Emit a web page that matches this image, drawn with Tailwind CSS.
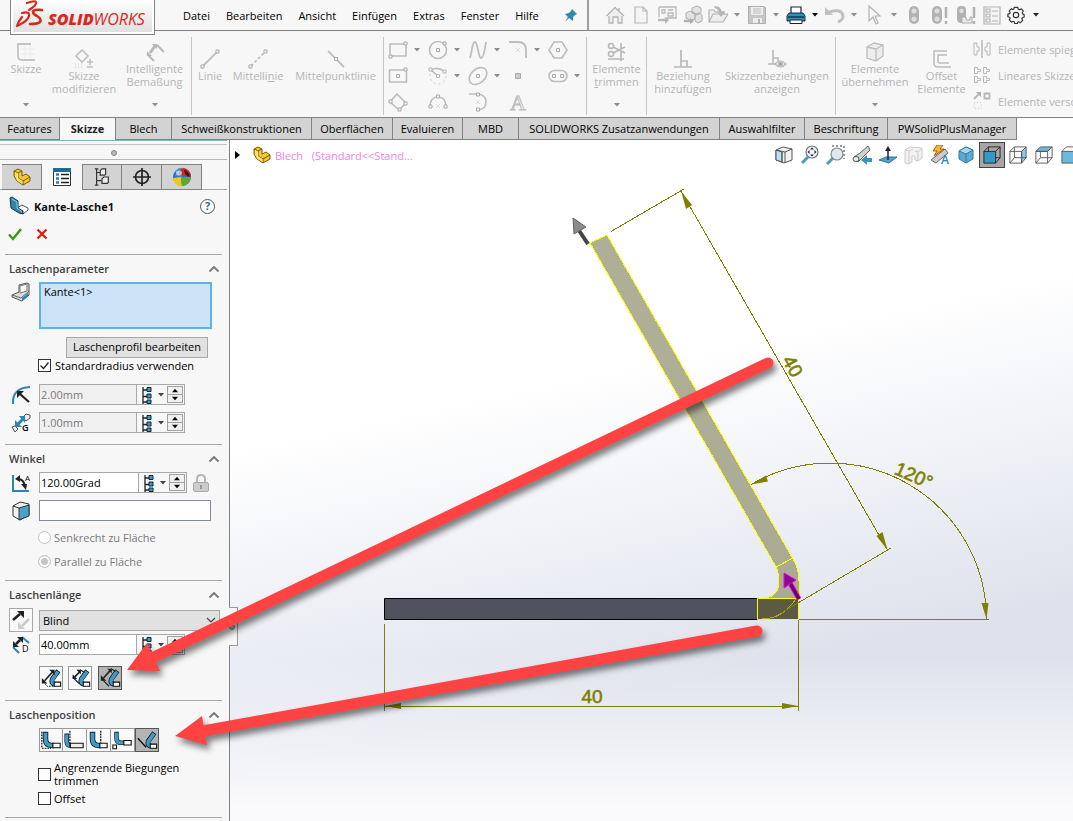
<!DOCTYPE html>
<html lang="de">
<head>
    <meta charset="UTF-8">
    <meta name="viewport" content="width=device-width, initial-scale=1.0">
    <title>SOLIDWORKS - Kante-Lasche</title>
    <script src="https://cdn.jsdelivr.net/npm/@tailwindcss/browser@4"></script>
</head>
<body class="relative flex h-screen flex-col overflow-hidden bg-[#f7f7f7] font-['Open_Sans','Noto_Sans',sans-serif] text-[11px] leading-[13px] text-black">

    <!-- Shared symbols -->
    <svg class="hidden">
        <symbol id="caret" viewBox="0 0 6 4"><path d="M0 0h6L3 3.5z" fill="currentColor"/></symbol>
        <symbol id="chevron" viewBox="0 0 12 8"><path d="M1.500 6.500L6 2l4.500 4.500" fill="none" stroke="#777" stroke-width="1.800"/></symbol>
        <symbol id="tree" viewBox="0 0 12 18">
            <path d="M2 1v17M2 4h4M2 10.500h4M2 16h4" fill="none" stroke="#222" stroke-width="1.300"/>
            <path d="M6 1.500h4v4H6zM6 8h4v4H6zM6 14h4v3.500H6z" fill="#3b9cc9" stroke="#123" />
        </symbol>
        <symbol id="up" viewBox="0 0 14 8"><path d="M3.500 6h7L7 2z" fill="#000"/></symbol>
        <symbol id="down" viewBox="0 0 14 8"><path d="M3.500 2h7L7 6z" fill="#000"/></symbol>
        <symbol id="part" viewBox="0 0 20 20">
            <path d="M2 4l4-2 4 2v5l4-2 4 3v4l-7 4-6-4-3-5z" fill="#f5c431" stroke="#7a5a08" stroke-linejoin="round"/>
            <path d="M2 4l4 2 4-2M6 6v5l5 3 7-4M11 14v4" fill="none" stroke="#7a5a08"/>
            <path d="M3 5l3 1.500v4.500l4.500 3v3L5 13.500 3 9z" fill="#ffe27a"/>
        </symbol>
        <symbol id="flange-up" viewBox="0 0 24 24">
            <path d="M6 3v8q0 7 7 7h2" fill="none" stroke="#0d2a3a" stroke-width="6"/>
            <path d="M6 4v7q0 7 7 7h1" fill="none" stroke="#4599c4" stroke-width="4"/>
            <path d="M14 15.500h8v5h-8z" fill="#fff" stroke="#111" stroke-width="1.200"/>
        </symbol>
        <symbol id="flange-tilt" viewBox="0 0 24 24">
            <path d="M20 4l-6.500 9q-2 5 3 5.500" fill="none" stroke="#0d2a3a" stroke-width="5.500"/>
            <path d="M19.500 5l-6 8.500q-1.500 4.500 3 5" fill="none" stroke="#4599c4" stroke-width="3.800"/>
            <path d="M15.500 16.500h7v4.500h-7z" fill="#fff" stroke="#111" stroke-width="1.200"/>
        </symbol>
    </svg>

    <!-- Title and menu bar -->
    <header class="flex h-[31px] shrink-0 border-b border-[#828282]">
        <div class="relative z-10 ml-[10px] h-[35px] w-[145px] shrink-0 border border-t-0 border-[#828282] bg-linear-to-b from-white to-[#dedede] shadow-[inset_0_0_0_2px_#fff]">
            <svg class="h-[34px] w-[143px]" viewBox="0 0 143 34" role="img" aria-label="SOLIDWORKS">
                <g fill="none" stroke="#da291c" stroke-linecap="round" stroke-linejoin="round">
                    <path d="M16 3q8-3 9-1 1 3-7 8" stroke-width="2.200"/>
                    <path d="M11 13q8-2 7 3-1 5-12 10 1-4 5-9" stroke-width="2.200"/>
                    <path d="M31 10q-9-1-9 2 0 2 4 4 5 3 3 6-2 2-10 2" stroke-width="2.600"/>
                </g>
                <text x="37" y="25" fill="#da291c" font-family="Open Sans, sans-serif" font-size="16" font-style="italic"><tspan font-weight="800">SOLID</tspan><tspan>WORKS</tspan></text>
            </svg>
        </div>
        <nav class="ml-[28px] flex w-[406px] shrink-0 items-center gap-4 border-r-2 border-[#a0a0a0]">
            <a href="#">Datei</a>
            <a href="#">Bearbeiten</a>
            <a href="#">Ansicht</a>
            <a href="#">Einfügen</a>
            <a href="#">Extras</a>
            <a href="#">Fenster</a>
            <a href="#">Hilfe</a>
            <svg class="ml-2 size-[16px]" viewBox="0 0 16 16"><path d="M9 2l5 5-2 1-2 2 0 4-4-3-4 4 3-5-3-3 4-1 2-2z" fill="#2f87b5"/></svg>
        </nav>

        <!-- Quick access -->
        <div class="flex flex-1 items-center pl-[16px] text-[#8d8d8d]">
            <button aria-label="Start" class="w-[26px]"><svg class="size-[20px]" viewBox="0 0 20 20" fill="#eee" stroke="#b4b4b4" stroke-width="1.300"><path d="M4 9v9h4v-6h5v6h4V9M14 3v3"/><path d="M1.500 11L10 2.500l9 8.500"/></svg></button>
            <button aria-label="Neu" class="w-[26px]"><svg class="size-[20px]" viewBox="0 0 20 20" fill="#f4f4f4" stroke="#b8b8b8" stroke-width="1.200"><path d="M4 2h8l4 4v12H4zM12 2v4h4"/></svg></button>
            <button aria-label="Zeichnung" class="w-[26px]"><svg class="size-[20px]" viewBox="0 0 20 20" fill="none" stroke="#b8b8b8" stroke-width="1.300"><path d="M2 2h17v11H9M2 2v10"/><path d="M5 5h3v3H5zM11 5h5M11 8h5v3h-5z"/><path d="M1 15h7" stroke-width="2.500"/><path d="M8 12l4 3-4 4z" fill="#b4b4b4" stroke="none"/></svg></button>
            <button aria-label="Baugruppe" class="w-[25px]"><svg class="size-[20px]" viewBox="0 0 20 20" fill="#e2e2e2" stroke="#b0b0b0"><path d="M9 3l5-2 4 2v5l-4 2-5-2zM3 8l4-2 5 2v6l-5 1-4-2zM12 9l4-1 3 2v6l-4 2-3-2z"/><path d="M1 16h6" stroke-width="2.500"/><path d="M7 13l4 3-4 3z" fill="#aaa" stroke="none"/></svg></button>
            <button aria-label="Öffnen" class="flex w-[39px] items-center gap-1.5"><svg class="size-[20px]" viewBox="0 0 20 20" fill="#eee" stroke="#b4b4b4" stroke-width="1.200"><path d="M1 17V5h5l1 2h9v3M1 17l4-8h15l-5 8z"/><path d="M6 2q7-1 7 6M10 7l3 4 3-4z" fill="#bbb"/></svg><svg class="h-1 w-1.5"><use href="#caret"/></svg></button>
            <button aria-label="Speichern" class="flex w-[39px] items-center gap-1.5"><svg class="size-[20px]" viewBox="0 0 20 20"><path d="M1.500 1.500h16l1 1v16h-17z" fill="#c6c6c6" stroke="#b0b0b0"/><path d="M4 2h12v8H4z" fill="#eee"/><path d="M6 4h8M6 6h8M6 8h8" stroke="#bbb"/><path d="M6 13h9v5H6z" fill="#eee"/><path d="M11 14h2v4h-2z" fill="#b0b0b0"/></svg><svg class="h-1 w-1.5"><use href="#caret"/></svg></button>
            <button aria-label="Drucken" class="flex w-[39px] items-center gap-1.5 text-black"><svg class="size-[20px]" viewBox="0 0 20 20"><path d="M5 9V2h10v7" fill="#fff" stroke="#222" stroke-width="1.200"/><path d="M3 8h14l2 3v5H1v-5z" fill="#2f8fbe" stroke="#134"/><path d="M4 15h12v3.500H4z" fill="#fff" stroke="#222"/><path d="M2 12h16" stroke="#0d3a55" stroke-width="1.500"/></svg><svg class="h-1 w-1.5"><use href="#caret"/></svg></button>
            <button aria-label="Rückgängig" class="flex w-[40px] items-center gap-1.5"><svg class="size-[20px]" viewBox="0 0 20 20"><path d="M4 7q13-4 14 4 0 4-5 6" fill="none" stroke="#c0c0c0" stroke-width="3"/><path d="M0 2v8h8z" fill="#c0c0c0"/></svg><svg class="h-1 w-1.5"><use href="#caret"/></svg></button>
            <button aria-label="Auswählen" class="flex w-[40px] items-center gap-1.5"><svg class="size-[20px]" viewBox="0 0 20 20" fill="#f6f6f6" stroke="#b4b4b4" stroke-width="1.200"><path d="M4 1v15l4-4 3 7 2-1-3-7h5z"/></svg><svg class="h-1 w-1.5"><use href="#caret"/></svg></button>
            <button aria-label="Neu aufbauen" class="w-[25px]"><svg class="size-[20px]" viewBox="0 0 20 20"><rect x="4" y="1" width="10" height="18" rx="5" fill="#b2b2b2"/><circle cx="9" cy="6" r="2.500" fill="#ddd"/><circle cx="9" cy="14" r="2.500" fill="#ddd"/></svg></button>
            <button aria-label="Alles neu aufbauen" class="w-[26px]"><svg class="size-[20px]" viewBox="0 0 20 20"><rect x="2" y="1" width="10" height="18" rx="5" fill="#b2b2b2"/><circle cx="7" cy="6" r="2.500" fill="#ddd"/><circle cx="7" cy="14" r="2.500" fill="#ddd"/><path d="M16 2v11M16 16v3" stroke="#b2b2b2" stroke-width="2.500"/></svg></button>
            <button aria-label="Datei aufbauen" class="w-[26px]"><svg class="size-[20px]" viewBox="0 0 20 20"><rect x="1" y="1" width="9" height="17" rx="4" fill="#b2b2b2"/><circle cx="5.500" cy="6" r="2.200" fill="#ddd"/><path d="M6 12h4v3h4v-3h2v6H6z" fill="#eee" stroke="#aaa"/><path d="M18 2v11M18 16v3" stroke="#b2b2b2" stroke-width="2.500"/></svg></button>
            <button aria-label="Eigenschaften" class="w-[25px]"><svg class="size-[20px]" viewBox="0 0 20 20" fill="none" stroke="#b4b4b4" stroke-width="1.200"><path d="M2 2h16v17H2z" fill="#f4f4f4"/><path d="M4 4h4v3H4zM4 9h4v3H4zM4 14h4v3H4zM10 6h6M10 11h6M10 16h6"/></svg></button>
            <button aria-label="Optionen" class="flex items-center gap-2 text-[#222]"><svg class="size-[18px]" viewBox="0 0 20 20" fill="none" stroke="#333" stroke-width="1.300" stroke-linejoin="round"><path d="M8 1.500h4l.5 2 1.500.7 2-1L18 5.500l-1 2 .5 1.500 1.500.5v3l-2 .5-.5 1.500 1 1.500-2.500 2.500-2-1-1 .5-.5 1.500H8.500L8 17.500 6.500 17l-1.500 1L2.500 15.500l1-1.500L3 12.500l-2-.5V9l2-.5L3.500 7l-1-1.500L5 3l1.500 1L7.500 3.500z"/><circle cx="10" cy="10" r="3"/></svg><svg class="h-1 w-1.5"><use href="#caret"/></svg></button>
        </div>
    </header>

    <!-- Ribbon -->
    <div class="flex h-[86px] shrink-0 items-start overflow-hidden pt-[6px] text-center text-[#b5b5b5]">
        <div class="flex h-[78px] shrink-0 border-r border-[#c6c6c6]">
            <button class="flex w-[52px] flex-col items-center pt-[5px]">
                <svg class="size-[20px]" viewBox="0 0 20 20" fill="none" stroke="#c4c4c4" stroke-width="1.800"><path d="M9 4v12M14 4v12M5 7h14M5 12h14" stroke="#ececec" stroke-width="1"/><path d="M15 2H2v12q0 4 4 4h13"/></svg>
                <span>Skizze</span>
                <svg class="mt-[28px] h-1 w-1.5 text-[#8d8d8d]"><use href="#caret"/></svg>
            </button>
            <button class="flex w-[64px] flex-col items-center pt-[12px]">
                <svg class="size-[20px]" viewBox="0 0 20 20" fill="none" stroke="#c0c0c0" stroke-width="1.600"><path d="M8 1l6 6-6 6-6-6z"/><path d="M1 15h8M1 18h8" stroke-dasharray="1 2" stroke="#d8d8d8"/><path d="M13 13h6M16 10v6M13 18h6"/></svg>
                <span>Skizze<br>modifizieren</span>
            </button>
            <button class="flex w-[75px] flex-col items-center pt-[5px] pl-[2px]">
                <svg class="size-[20px]" viewBox="0 0 20 20" fill="none" stroke="#b8b8b8" stroke-width="1.800"><path d="M5 11l5-7" stroke-width="3"/><path d="M2 9v5h5zM7 2h5v5z" fill="#b8b8b8" stroke="none"/><path d="M2 12l7 7M12 3l7 7"/></svg>
                <span>Intelligente<br>Bemaßung</span>
                <svg class="mt-[15px] h-1 w-1.5 text-[#8d8d8d]"><use href="#caret"/></svg>
            </button>
        </div>
        <div class="flex h-[78px] shrink-0 border-r border-[#c6c6c6]">
            <button class="flex w-[36px] flex-col items-center pt-[12px]">
                <svg class="size-[20px]" viewBox="0 0 20 20" fill="none" stroke="#c0c0c0"><path d="M3 17L17 3" stroke-width="1.800"/><path d="M1 16h3v3H1zM16 1h3v3h-3z" fill="#f7f7f7" stroke="#aaa"/></svg>
                <span>Linie</span>
            </button>
            <button class="flex w-[60px] flex-col items-center pt-[12px]">
                <svg class="size-[20px]" viewBox="0 0 20 20" fill="none" stroke="#c0c0c0"><path d="M3 17L17 3" stroke-width="1.800" stroke-dasharray="3 2"/><path d="M1 16h3v3H1zM16 1h3v3h-3z" fill="#f7f7f7" stroke="#aaa"/></svg>
                <span>Mittelli<u>n</u>ie</span>
            </button>
            <button class="flex w-[95px] flex-col items-center pt-[12px]">
                <svg class="size-[20px]" viewBox="0 0 20 20" fill="none" stroke="#c0c0c0"><path d="M2 2l16 16" stroke-width="1.800"/><path d="M8.500 8.500h3v3h-3z" fill="#f7f7f7" stroke="#aaa"/></svg>
                <span>Mittelpunktlinie</span>
            </button>
        </div>

        <!-- Sketch entities -->
        <div class="grid h-[78px] shrink-0 grid-cols-[40px_40px_40px_40px_38px] grid-rows-3 border-r border-[#c6c6c6] pl-[4px] text-[#8d8d8d]">
            <button aria-label="Rechteck" class="flex items-center gap-1.5"><svg class="size-[20px]" viewBox="0 0 20 20" fill="none" stroke="#bdbdbd"><path d="M2 4h16v12H2z" stroke-width="1.600"/><path d="M1 15h3v3H1zM16 2h3v3h-3z" fill="#f7f7f7" stroke="#aaa"/></svg><svg class="h-1 w-1.5"><use href="#caret"/></svg></button>
            <button aria-label="Kreis" class="flex items-center gap-1.5"><svg class="size-[20px]" viewBox="0 0 20 20" fill="none" stroke="#bdbdbd"><circle cx="10" cy="10" r="8.500" stroke-width="1.600"/><path d="M8.500 8.500h3v3h-3zM15 2h3v3h-3z" fill="#f7f7f7" stroke="#aaa"/></svg><svg class="h-1 w-1.5"><use href="#caret"/></svg></button>
            <button aria-label="Spline" class="flex items-center gap-1.5"><svg class="size-[20px]" viewBox="0 0 20 20" fill="none" stroke="#bdbdbd" stroke-width="1.800"><path d="M2 18C4 12 4 2 7 2s3 16 6 16 4-10 5-16"/></svg><svg class="h-1 w-1.5"><use href="#caret"/></svg></button>
            <button aria-label="Verrundung" class="flex items-center gap-1.5"><svg class="size-[20px]" viewBox="0 0 20 20" fill="none" stroke="#bdbdbd" stroke-width="1.800"><path d="M1 2h9q8 0 8 8v8"/><path d="M8 8l4 4M12 8l-4 4" stroke="#ddd" stroke-width="1"/></svg><svg class="h-1 w-1.5"><use href="#caret"/></svg></button>
            <button aria-label="Polygon" class="flex items-center"><svg class="size-[20px]" viewBox="0 0 20 20" fill="none" stroke="#bdbdbd"><path d="M6 2h8l5 8-5 8H6l-5-8z" stroke-width="1.600"/><path d="M8.500 8.500h3v3h-3z" stroke="#aaa"/></svg></button>

            <button aria-label="Mittelpunkt-Rechteck" class="flex items-center"><svg class="size-[20px]" viewBox="0 0 20 20" fill="none" stroke="#bdbdbd"><path d="M1.500 4h17v12h-17z" stroke-width="1.600"/><path d="M8.500 8.500h3v3h-3zM16 2h3v3h-3z" fill="#f7f7f7" stroke="#aaa"/></svg></button>
            <button aria-label="Bogen" class="flex items-center gap-1.5"><svg class="size-[20px]" viewBox="0 0 20 20" fill="none" stroke="#b8b8b8"><path d="M3 4q7-4 14 2M3 4l7 6" stroke-width="1.500"/><circle cx="10" cy="10" r="8" stroke-dasharray="2 3" stroke="#d0d0d0"/><path d="M1 2h3v3H1zM15 4h3v3h-3zM8.500 8.500h3v3h-3z" fill="#f7f7f7"/></svg><svg class="h-1 w-1.5"><use href="#caret"/></svg></button>
            <button aria-label="Ellipse" class="flex items-center gap-1.5"><svg class="size-[20px]" viewBox="0 0 20 20" fill="none" stroke="#bdbdbd"><ellipse cx="10" cy="10" rx="10" ry="7" transform="rotate(-42 10 10)" stroke-width="1.600"/><path d="M8.500 8.500h3v3h-3z" stroke="#aaa"/></svg><svg class="h-1 w-1.5"><use href="#caret"/></svg></button>
            <button aria-label="Punkt" class="flex items-center"><svg class="size-[20px]" viewBox="0 0 20 20"><path d="M7.500 7.500h5v5h-5z" fill="#ccc" stroke="#aaa"/></svg></button>
            <button aria-label="Langloch" class="flex items-center gap-1.5"><svg class="size-[20px]" viewBox="0 0 20 20" fill="none" stroke="#bdbdbd"><rect x="1" y="4.500" width="18" height="11" rx="5.500" stroke-width="1.600"/><path d="M4.500 8.500h3v3h-3zM12.500 8.500h3v3h-3z" stroke="#aaa"/></svg><svg class="h-1 w-1.5"><use href="#caret"/></svg></button>

            <button aria-label="Parallelogramm" class="flex items-center"><svg class="size-[20px]" viewBox="0 0 20 20" fill="none" stroke="#bdbdbd"><path d="M9 2l9 9-7 7-9-8z" stroke-width="1.600"/><path d="M1 8h3v3H1zM16 10h3v3h-3zM10 16h3v3h-3z" fill="#f7f7f7" stroke="#aaa"/></svg></button>
            <button aria-label="3-Punkt-Bogen" class="flex items-center"><svg class="size-[20px]" viewBox="0 0 20 20" fill="none" stroke="#bdbdbd"><path d="M2 15q0-10 8-10t8 10" stroke-width="1.600"/><path d="M8 12l4 4M12 12l-4 4" stroke="#ddd"/><path d="M1 13h3v3H1zM16 13h3v3h-3zM8.500 3h3v3h-3z" fill="#f7f7f7" stroke="#aaa"/></svg></button>
            <button aria-label="Tangentialbogen" class="flex items-center"><svg class="size-[20px]" viewBox="0 0 20 20" fill="none" stroke="#bdbdbd"><path d="M1 2h9q8 1 8 8t-8 8" stroke-width="1.600"/><path d="M8 8l4 4M12 8l-4 4" stroke="#ddd"/><path d="M8.500 1h3v3h-3zM8.500 16h3v3h-3z" fill="#f7f7f7" stroke="#aaa"/></svg></button>
            <button aria-label="Text" class="flex w-[20px] items-center justify-center overflow-visible"><svg class="size-[20px] overflow-visible" viewBox="0 0 20 20"><text x="2" y="18" font-family="Liberation Serif, serif" font-size="22" fill="#f4f4f4" stroke="#bdbdbd">A</text></svg></button>
        </div>

        <div class="flex h-[78px] shrink-0 border-r border-[#c6c6c6]">
            <button class="flex w-[59px] flex-col items-center pt-[5px]">
                <svg class="size-[20px]" viewBox="0 0 20 20" fill="none" stroke="#b8b8b8" stroke-width="1.600"><circle cx="4" cy="4" r="2.500"/><circle cx="4" cy="12" r="2.500"/><path d="M6 5l12 6M6 11l12-6M14 1v6M14 10v9M1 17h16"/></svg>
                <span>Elemente<br><u>t</u>rimmen</span>
                <svg class="mt-[15px] h-1 w-1.5 text-[#8d8d8d]"><use href="#caret"/></svg>
            </button>
        </div>
        <div class="flex h-[78px] shrink-0 border-r border-[#c6c6c6]">
            <button class="flex w-[72px] flex-col items-center pt-[12px]">
                <svg class="size-[20px]" viewBox="0 0 20 20" fill="none" stroke="#b8b8b8" stroke-width="1.700"><path d="M1 18h18M8 1v17M8 12h6v6"/></svg>
                <span>Beziehung<br>hinzufügen</span>
            </button>
            <button class="flex w-[116px] flex-col items-center pt-[12px]">
                <svg class="size-[20px]" viewBox="0 0 20 20" fill="none" stroke="#b8b8b8" stroke-width="1.600"><path d="M1 15h8M6 1v14M6 9h5v3"/><path d="M8 15q5.500-6 11 0-5.500 6-11 0z" fill="#eee" stroke-width="1.200"/><circle cx="13.500" cy="15" r="1.800" fill="#999"/></svg>
                <span>Skizzenbeziehungen<br>anzeigen</span>
            </button>
        </div>
        <div class="flex h-[78px] shrink-0">
            <button class="flex w-[78px] flex-col items-center pt-[5px]">
                <svg class="size-[20px]" viewBox="0 0 20 20" fill="#ededed" stroke="#bdbdbd" stroke-width="1.300"><path d="M2 5l7-4 9 2v11l-7 5-9-3z"/><path d="M2 5l9 2 7-4M11 7v12" fill="none"/></svg>
                <span>Elemente<br>übernehmen</span>
                <svg class="mt-[15px] h-1 w-1.5 text-[#8d8d8d]"><use href="#caret"/></svg>
            </button>
            <button class="flex w-[55px] flex-col items-center pt-[12px]">
                <svg class="size-[20px]" viewBox="0 0 20 20" fill="none" stroke="#bdbdbd" stroke-width="1.600"><path d="M15 2H2v12q0 4 4 4h13M15 6H6v6q0 2 2 2h9"/></svg>
                <span>Offset<br>Elemente</span>
            </button>
            <div class="-mt-px flex flex-col pl-[4px] whitespace-nowrap">
                <button class="flex h-[26px] items-center gap-[7px]"><svg class="size-[18px]" viewBox="0 0 18 18" fill="none" stroke="#b8b8b8"><path d="M9 0v18" stroke-width="1.500"/><path d="M1 3h3v4h2v4H4v4H1zM17 3h-3v4h-2v4h2v4h3z"/></svg>Elemente spiegeln</button>
                <button class="flex h-[26px] items-center gap-[7px]"><svg class="size-[18px]" viewBox="0 0 18 18" fill="none" stroke="#b8b8b8"><path d="M1.500 1.500h3v2h3v2h-3v2h-3zM10.500 1.500h3v2h3v2h-3v2h-3zM1.500 10.500h3v2h3v2h-3v2h-3zM10.500 10.500h3v2h3v2h-3v2h-3z"/></svg>Lineares Skizzenmuster</button>
                <button class="flex h-[26px] items-center gap-[7px]"><svg class="size-[18px]" viewBox="0 0 18 18" fill="none" stroke="#b8b8b8"><path d="M1 7l6-6" stroke-width="2"/><path d="M3 0h5v5z" fill="#b0b0b0" stroke="none"/><path d="M11.500 1.500h5v5h-5z" stroke-width="1.800"/><path d="M1 10.500h7v6H1z" stroke-dasharray="1 2" stroke="#ccc"/></svg>Elemente verschieben</button>
            </div>
        </div>
    </div>

    <!-- Command tabs -->
    <div class="flex h-[23px] shrink-0 border-t border-[#828282] bg-white" role="tablist">
        <button role="tab" class="w-[60px] border-r border-b border-[#828282] bg-[#d3d3d3]">Features</button>
        <button role="tab" aria-selected="true" class="w-[55px] border-b border-[#f7f7f7] bg-[#f7f7f7] font-bold text-[#222]">Skizze</button>
        <button role="tab" class="w-[57px] border-x border-b border-[#828282] bg-[#d3d3d3]">Blech</button>
        <button role="tab" class="w-[140px] border-r border-b border-[#828282] bg-[#d3d3d3]">Schweißkonstruktionen</button>
        <button role="tab" class="w-[81px] border-r border-b border-[#828282] bg-[#d3d3d3]">Oberflächen</button>
        <button role="tab" class="w-[70px] border-r border-b border-[#828282] bg-[#d3d3d3]">Evaluieren</button>
        <button role="tab" class="w-[56px] border-r border-b border-[#828282] bg-[#d3d3d3]">MBD</button>
        <button role="tab" class="w-[201px] border-r border-b border-[#828282] bg-[#d3d3d3]">SOLIDWORKS Zusatzanwendungen</button>
        <button role="tab" class="w-[85px] border-r border-b border-[#828282] bg-[#d3d3d3]">Auswahlfilter</button>
        <button role="tab" class="w-[83px] border-r border-b border-[#828282] bg-[#d3d3d3]">Beschriftung</button>
        <button role="tab" class="w-[129px] border-r border-b border-[#828282] bg-[#d3d3d3]">PWSolidPlusManager</button>
    </div>

    <main class="flex min-h-0 flex-1">
        <!-- PropertyManager -->
        <aside class="relative w-[230px] shrink-0 border-r border-[#828282] bg-[#f7f7f7]">
            <div class="mr-[2px] flex h-5 items-center justify-center border-t border-b border-t-[#8fb0bd] border-b-[#b8b8b8] pt-[5px] shadow-[inset_0_3px_0_#f7f7f7,inset_0_4px_0_#c4c4c4]">
                <span class="size-[6px] rounded-full border border-[#888] bg-[#bbb]"></span>
            </div>
            <div class="mr-[2px] flex h-[30px] border-b border-[#a8a8a8] pt-[4px] pl-[2px]">
                <button aria-label="FeatureManager" class="flex h-[26px] w-[40px] items-center justify-center border-t border-r border-b border-[#828282] bg-[#d3d3d3]"><svg class="size-[20px]"><use href="#part"/></svg></button>
                <button aria-label="PropertyManager" class="flex h-[26px] w-[40px] items-center justify-center bg-[#f7f7f7]"><svg class="size-[20px]" viewBox="0 0 20 20"><path d="M1.500 1.500h17v17h-17z" fill="#fff" stroke="#333"/><path d="M1 1h18v4H1z" fill="#1d6c96"/><path d="M4 7.500h3M4 11.500h3M4 15.500h3" stroke="#2482b0" stroke-width="2.500"/><path d="M9 7.500h8M9 11.500h8M9 15.500h8" stroke="#222" stroke-width="1.400"/></svg></button>
                <button aria-label="ConfigurationManager" class="flex h-[26px] w-[40px] items-center justify-center border border-[#828282] bg-[#d3d3d3]"><svg class="size-[18px]" viewBox="0 0 20 20" fill="#eee" stroke="#333" stroke-width="1.300"><path d="M4 1v18M4 5h5M4 14h7M2 1h4M2 19h4" fill="none"/><path d="M8 3l2-2h4v6l-1 1H8zM10 12l2-2h5v6l-1 1h-6z"/></svg></button>
                <button aria-label="DimXpertManager" class="flex h-[26px] w-[40px] items-center justify-center border-t border-r border-b border-[#828282] bg-[#d3d3d3]"><svg class="size-[20px]" viewBox="0 0 20 20" fill="none" stroke="#222" stroke-width="1.700"><circle cx="10" cy="10" r="6.500"/><path d="M10 1v18M1 10h18"/></svg></button>
                <button aria-label="DisplayManager" class="flex h-[26px] w-[40px] items-center justify-center border-t border-r border-b border-[#828282] bg-[#d3d3d3]"><svg class="size-[20px]" viewBox="0 0 20 20"><circle cx="10" cy="10" r="9" fill="#2b6fc4"/><path d="M10 10L3 4q4-4 9-3z" fill="#5aa9dd"/><path d="M10 10V1q-4 0-6 3l-1 5z" fill="#3d8ed0"/><path d="M7 8q0-6 5-7 7 2 7 9z" fill="#d9261c"/><path d="M1 11l8-1 1 9q-8 0-9-8z" fill="#f2c81c"/><path d="M9 10h10q-1 8-9 9z" fill="#58a83a"/><path d="M12 3q5 1 6 7-5-1-6-7z" fill="#222"/><ellipse cx="7" cy="6" rx="3" ry="2.500" fill="#fff" opacity=".6"/></svg></button>
            </div>
            <div class="flex h-8 items-center pl-[9px]">
                <svg class="size-[20px]" viewBox="0 0 20 20"><path d="M8 12l5-3 6 3v2l-5 4z" fill="#fff" stroke="#555"/><path d="M1 2l2-1 6 4v7l5 3v3l-4-1-8-5z" fill="#2f83ad" stroke="#12384c"/><path d="M3 3l5 3v6l5 4" fill="none" stroke="#8fcdeb"/></svg>
                <h1 class="ml-[5px] flex-1 font-bold text-[#111]">Kante-Lasche1</h1>
                <button aria-label="Hilfe" class="mr-[14px] size-[15px] rounded-full border border-[#555] bg-white text-[11px] leading-[12px] font-bold text-[#1d6c96]">?</button>
            </div>
            <div class="flex h-6 items-center gap-[14px] pl-[8px]">
                <button aria-label="OK"><svg class="size-[14px]" viewBox="0 0 14 14"><path d="M1 7.500l4 4.500L13 2" fill="none" stroke="#2f9e0b" stroke-width="2.400"/></svg></button>
                <button aria-label="Abbrechen"><svg class="size-[12px]" viewBox="0 0 12 12"><path d="M1.500 1.500l9 9M10.500 1.500l-9 9" stroke="#d81e05" stroke-width="2.200"/></svg></button>
            </div>

            <!-- Laschenparameter -->
            <section class="mt-2 mr-[7px] ml-[5px] border-t border-[#a8a8a8] pb-[11px]">
                <h2 class="flex h-[27px] items-center justify-between pr-[2px] pl-[4px] font-semibold text-[#3f3f3f]">Laschenparameter<svg class="h-2 w-3"><use href="#chevron"/></svg></h2>
                <div class="flex">
                    <svg class="mr-[8px] ml-[6px] size-[20px]" viewBox="0 0 20 20"><path d="M8 3l8-2 2 1v11l-7 6-10-4v-2l7-3z" fill="#dcdcdc" stroke="#555"/><path d="M9 4l7-2v7l-7 2z" fill="#fafafa" stroke="#777"/><path d="M1 13l9 3 8-7" fill="none" stroke="#666"/><path d="M11 16l6-5v3l-6 5z" fill="#2b86b4"/></svg>
                    <textarea aria-label="Kante" class="h-[47px] w-[173px] resize-none border-2 border-[#5ab4e8] bg-[#cde3f8] px-[3px] py-px">Kante&lt;1&gt;</textarea>
                </div>
                <button class="mt-2 ml-[61px] block h-[21px] w-[142px] border border-[#a8a8a8] bg-[#e1e1e1] pb-[2px]">Laschenprofil bearbeiten</button>
                <label class="ml-[33px] flex h-[15px] items-center gap-[3px]"><input type="checkbox" checked class="size-[13px] appearance-none border border-[#333] bg-white"><svg class="mr-px -ml-[16px] size-[13px]" viewBox="0 0 13 13"><path d="M2.500 6.500l3 3 5-6" fill="none" stroke="#222" stroke-width="1.300"/></svg>Standardradius verwenden</label>
                <div class="mt-[11px] flex h-[21px] items-center">
                    <svg class="mr-[8px] ml-[6px] size-[20px]" viewBox="0 0 20 20"><path d="M2 19Q1 3 19 2" fill="none" stroke="#2b86b4" stroke-width="2"/><path d="M18 17L9 9" stroke="#222" stroke-width="2.200"/><path d="M6 6h7l-7 7z" fill="#222"/></svg>
                    <div class="flex h-[21px] w-[146px] items-center border border-[#a8a8a8]">
                        <input aria-label="Biegeradius" disabled value="2.00mm" class="h-full w-[97px] border-r border-[#a8a8a8] bg-[#f0f0f0] px-px text-[#7a7a7a]">
                        <button aria-label="Variable" class="flex h-full flex-1 items-center justify-center gap-[5px]"><svg class="h-[18px] w-3"><use href="#tree"/></svg><svg class="h-1 w-1.5 text-[#444]"><use href="#caret"/></svg></button>
                        <span class="mr-px flex w-[16px] flex-col"><button aria-label="Mehr" class="h-[9px] border border-[#a0a0a0] bg-[#f0f0f0]"><svg class="h-[7px] w-[14px]"><use href="#up"/></svg></button><button aria-label="Weniger" class="h-[8px] border border-t-0 border-[#a0a0a0] bg-[#f0f0f0]"><svg class="h-[7px] w-[14px]"><use href="#down"/></svg></button></span>
                    </div>
                </div>
                <div class="mt-[7px] flex h-[21px] items-center">
                    <svg class="mr-[8px] ml-[6px] size-[20px]" viewBox="0 0 20 20"><path d="M12 4l3-3 4 1v3l-4 3zM1 14l3-1 3 3-3 3z" fill="#eee" stroke="#555"/><path d="M6 12l6-6" stroke="#2b86b4" stroke-width="3"/><path d="M4 7v7h7zM8 3h6v7z" fill="#2b86b4"/><text x="11" y="18" font-size="9" font-family="Open Sans, sans-serif" font-weight="600">G</text></svg>
                    <div class="flex h-[21px] w-[146px] items-center border border-[#a8a8a8]">
                        <input aria-label="Spaltabstand" disabled value="1.00mm" class="h-full w-[97px] border-r border-[#a8a8a8] bg-[#f0f0f0] px-px text-[#7a7a7a]">
                        <button aria-label="Variable" class="flex h-full flex-1 items-center justify-center gap-[5px]"><svg class="h-[18px] w-3"><use href="#tree"/></svg><svg class="h-1 w-1.5 text-[#444]"><use href="#caret"/></svg></button>
                        <span class="mr-px flex w-[16px] flex-col"><button aria-label="Mehr" class="h-[9px] border border-[#a0a0a0] bg-[#f0f0f0]"><svg class="h-[7px] w-[14px]"><use href="#up"/></svg></button><button aria-label="Weniger" class="h-[8px] border border-t-0 border-[#a0a0a0] bg-[#f0f0f0]"><svg class="h-[7px] w-[14px]"><use href="#down"/></svg></button></span>
                    </div>
                </div>
            </section>

            <!-- Winkel -->
            <section class="mr-[7px] ml-[5px] border-t border-[#a8a8a8] pb-[10px]">
                <h2 class="flex h-[27px] items-center justify-between pr-[2px] pl-[4px] font-semibold text-[#3f3f3f]">Winkel<svg class="h-2 w-3"><use href="#chevron"/></svg></h2>
                <div class="flex h-[21px] items-center">
                    <svg class="mr-[8px] ml-[6px] size-[20px]" viewBox="0 0 20 20"><path d="M2 2v16h16" fill="none" stroke="#2b86b4" stroke-width="2"/><path d="M7 6q6 0 7 8" fill="none" stroke="#222" stroke-width="2"/><path d="M4 6l5-4v7zM10 11l6 0-1 6z" fill="#222"/><text x="14" y="8" font-size="8" font-family="Open Sans, sans-serif">A</text></svg>
                    <div class="flex h-[21px] w-[148px] items-center border border-[#a8a8a8]">
                        <input aria-label="Laschenwinkel" value="120.00Grad" class="h-full w-[99px] border-r border-[#a8a8a8] bg-white px-px">
                        <button aria-label="Variable" class="flex h-full flex-1 items-center justify-center gap-[5px]"><svg class="h-[18px] w-3"><use href="#tree"/></svg><svg class="h-1 w-1.5 text-[#444]"><use href="#caret"/></svg></button>
                        <span class="mr-px flex w-[16px] flex-col"><button aria-label="Mehr" class="h-[9px] border border-[#a0a0a0] bg-[#f0f0f0]"><svg class="h-[7px] w-[14px]"><use href="#up"/></svg></button><button aria-label="Weniger" class="h-[8px] border border-t-0 border-[#a0a0a0] bg-[#f0f0f0]"><svg class="h-[7px] w-[14px]"><use href="#down"/></svg></button></span>
                    </div>
                    <svg class="ml-[5px] size-[18px]" viewBox="0 0 18 18"><path d="M5 9V5q0-4 4-4t4 4v4" fill="none" stroke="#b5b5b5" stroke-width="2"/><rect x="1.500" y="8.500" width="15" height="9" rx="1.500" fill="#ccc" stroke="#aaa"/><path d="M9 11v4" stroke="#888" stroke-width="1.500"/></svg>
                </div>
                <div class="mt-[7px] flex h-[21px] items-center">
                    <svg class="mr-[8px] ml-[6px] size-[20px]" viewBox="0 0 20 20" stroke="#333" stroke-linejoin="round"><path d="M2 5l7-4 9 2v11l-9 5-7-4z" fill="#f2f2f2"/><path d="M8 7l10-3v11l-10 4z" fill="#4ba0cc"/><path d="M2 5l6 2" fill="none"/></svg>
                    <input aria-label="Fläche auswählen" class="h-[21px] w-[172px] border border-[#828aa0] bg-white px-[3px]">
                </div>
                <label class="mt-[7px] ml-[33px] flex h-[18px] items-center gap-[3px] text-[#7a7a7a]"><input type="radio" name="dir" disabled class="size-[13px] appearance-none rounded-full border border-[#c4c4c4] bg-white">Senkrecht zu Fläche</label>
                <label class="mt-1.5 ml-[33px] flex h-[18px] items-center gap-[3px] text-[#7a7a7a]"><input type="radio" name="dir" disabled checked class="size-[13px] appearance-none rounded-full border border-[#c4c4c4] bg-[#c4c4c4] shadow-[inset_0_0_0_2px_#fff]">Parallel zu Fläche</label>
            </section>

            <!-- Laschenlänge -->
            <section class="mr-[7px] ml-[5px] border-t border-[#a8a8a8] pb-[10px]">
                <h2 class="flex h-[27px] items-center justify-between pr-[2px] pl-[4px] font-semibold text-[#3f3f3f]">Laschenlänge<svg class="h-2 w-3"><use href="#chevron"/></svg></h2>
                <div class="flex h-6 items-center">
                    <button aria-label="Richtung umkehren" class="mr-[6px] ml-[4px] flex size-6 items-center justify-center border border-[#a8a8a8] bg-[#f9f9f9]"><svg class="size-[20px]" viewBox="0 0 20 20"><path d="M2 10l7-6" stroke="#222" stroke-width="2.600"/><path d="M6 1h7v7z" fill="#222"/><path d="M18 9l-7 7" stroke="#ccc" stroke-width="2.600"/><path d="M7 12v7h7z" fill="#ccc"/></svg></button>
                    <div class="relative">
                        <select aria-label="Endbedingung" class="h-[21px] w-[181px] appearance-none border border-[#a8a8a8] bg-[#e1e1e1] pl-[3px]"><option>Blind</option></select>
                        <svg class="pointer-events-none absolute top-[7px] right-[4px] h-[7px] w-[10px]" viewBox="0 0 10 7"><path d="M1 1l4 4 4-4" fill="none" stroke="#444" stroke-width="1.200"/></svg>
                    </div>
                </div>
                <div class="mt-[2px] flex h-[21px] items-center">
                    <svg class="mr-[8px] ml-[6px] size-[20px]" viewBox="0 0 20 20"><path d="M2 12l6 6M11 2l7 6" stroke="#2b86b4" stroke-width="2"/><path d="M5 9l4-4" stroke="#222" stroke-width="2.500"/><path d="M2 6v6h6zM6 2h6v6z" fill="#222"/><text x="11" y="17" font-size="9" font-family="Open Sans, sans-serif">D</text></svg>
                    <div class="flex h-[21px] w-[146px] items-center border border-[#a8a8a8]">
                        <input aria-label="Länge" value="40.00mm" class="h-full w-[97px] border-r border-[#a8a8a8] bg-white px-px">
                        <button aria-label="Variable" class="flex h-full flex-1 items-center justify-center gap-[5px]"><svg class="h-[18px] w-3"><use href="#tree"/></svg><svg class="h-1 w-1.5 text-[#444]"><use href="#caret"/></svg></button>
                        <span class="mr-px flex w-[16px] flex-col"><button aria-label="Mehr" class="h-[9px] border border-[#a0a0a0] bg-[#f0f0f0]"><svg class="h-[7px] w-[14px]"><use href="#up"/></svg></button><button aria-label="Weniger" class="h-[8px] border border-t-0 border-[#a0a0a0] bg-[#f0f0f0]"><svg class="h-[7px] w-[14px]"><use href="#down"/></svg></button></span>
                    </div>
                </div>
                <div class="mt-[11px] ml-[34px] flex gap-[5px]">
                    <button aria-label="Äußere virtuelle Ecke" class="size-6 border border-[#999] bg-[#f9f9f9]"><svg class="size-[22px]" viewBox="0 0 24 24"><use href="#flange-tilt"/><path d="M5 15L14 5" stroke="#222" stroke-width="1.800"/><path d="M2 12v6h6zM10 3h6v6z" fill="#222"/><path d="M5 18l3 3h7" fill="none" stroke="#222" stroke-dasharray="2 1"/></svg></button>
                    <button aria-label="Innere virtuelle Ecke" class="size-6 border border-[#999] bg-[#f9f9f9]"><svg class="size-[22px]" viewBox="0 0 24 24"><use href="#flange-tilt"/><path d="M6 11l6-6" stroke="#222" stroke-width="1.800"/><path d="M4 8v5h5zM8 3h5v5z" fill="#222"/><path d="M4 11l7 7M12 3l5 3" stroke="#222" stroke-width="1.300"/></svg></button>
                    <button aria-label="Tangential biegen" class="ml-px size-6 border border-[#555] bg-[#b4b4b4]"><svg class="size-[22px]" viewBox="0 0 24 24"><use href="#flange-tilt"/><path d="M5 12l7-8" stroke="#222" stroke-width="1.800"/><path d="M2 9v6h6zM9 2h5v5z" fill="#222"/><path d="M3 13l8 8M13 2l5 3" stroke="#222" stroke-width="1.300"/></svg></button>
                </div>
            </section>

            <!-- Laschenposition -->
            <section class="mr-[7px] ml-[5px] border-t border-[#a8a8a8] pb-[11px]">
                <h2 class="flex h-[27px] items-center justify-between pr-[2px] pl-[4px] font-semibold text-[#3f3f3f]">Laschenposition<svg class="h-2 w-3"><use href="#chevron"/></svg></h2>
                <div class="ml-[34px] flex">
                    <button aria-label="Material innen" class="size-6 border border-[#999] bg-[#f9f9f9]"><svg class="size-[22px]" viewBox="0 0 24 24"><use href="#flange-up"/><path d="M2 3v18h10" fill="none" stroke="#111" stroke-width="1.300" stroke-dasharray="2 1"/></svg></button>
                    <button aria-label="Material außen" class="size-6 border border-l-0 border-[#999] bg-[#f9f9f9]"><svg class="size-[22px]" viewBox="0 0 24 24"><path d="M4 5v8q0 5 4 5" fill="none" stroke="#0d2a3a" stroke-width="5"/><path d="M4 6v7q0 5 4 5" fill="none" stroke="#4599c4" stroke-width="3.500"/><path d="M8 15.500h14v5H8z" fill="#eee" stroke="#111" stroke-width="1.200"/><path d="M7.500 2v18" stroke="#111" stroke-width="1.300" stroke-dasharray="2 1"/></svg></button>
                    <button aria-label="Biegung außen" class="size-6 border border-l-0 border-[#999] bg-[#f9f9f9]"><svg class="size-[22px]" viewBox="0 0 24 24"><use href="#flange-up"/><path d="M15 2v13" stroke="#111" stroke-width="1.300" stroke-dasharray="2 1"/></svg></button>
                    <button aria-label="Biegung von virtueller Ecke" class="size-6 border border-l-0 border-[#999] bg-[#f9f9f9]"><svg class="size-[22px]" viewBox="0 0 24 24"><path d="M6 3v7q0 5 5 5h4" fill="none" stroke="#0d2a3a" stroke-width="5"/><path d="M6 4v6q0 5 5 5h3" fill="none" stroke="#4599c4" stroke-width="3.500"/><path d="M14 12.500h8v5h-8zM2 17.500h4v4H2z" fill="#fff" stroke="#111" stroke-width="1.200"/></svg></button>
                    <button aria-label="Tangente an Biegung" class="size-6 border border-[#555] bg-[#b4b4b4]"><svg class="size-[22px]" viewBox="0 0 24 24"><use href="#flange-tilt"/><path d="M2 10l9 10" stroke="#111" stroke-width="1.500"/></svg></button>
                </div>
                <label class="mt-[9px] ml-[33px] flex items-center gap-[3px]"><input type="checkbox" class="size-[13px] shrink-0 appearance-none border border-[#333] bg-white"><span>Angrenzende Biegungen<br>trimmen</span></label>
                <label class="mt-[3px] ml-[33px] flex h-4 items-center gap-[3px]"><input type="checkbox" class="size-[13px] appearance-none border border-[#333] bg-white">Offset</label>
            </section>
            <div class="mr-[7px] ml-[5px] border-t border-[#a8a8a8]"></div>

            <!-- Panel splitter grip -->
            <div class="absolute top-[467px] -right-[9px] z-10 flex h-[39px] w-[9px] items-center border border-l-0 border-[#999] bg-[#f7f7f7]"><span class="size-[6px] rounded-full border border-[#888] bg-[#bbb]"></span></div>
        </aside>

        <!-- Graphics area -->
        <section class="relative min-w-0 flex-1 overflow-hidden bg-[linear-gradient(to_bottom,transparent_76%,#fafafc_98%),linear-gradient(168deg,#fff_36%,#f0f2f7_54%,#dfe2ec_74%)]">
            <svg class="absolute top-0 left-0 h-[681px] w-[843px]" viewBox="230 140 843 681">
                <!-- sheet and flange -->
                <path d="M384.500 598.500h373v21h-373z" fill="#50535f" stroke="#000"/>
                <path d="M590 243l17-8 186 324q6 10 6 22v17h-34q14-2 14-17 0-8-3-14z" fill="#98987a" fill-opacity=".78"/>
                <path d="M757.500 598.500h41v21h-41z" fill="#5c5b42" stroke="#ff0"/>
                <g fill="none" shape-rendering="crispEdges">
                    <path d="M590 243l17-8 186 324q6 10 6 22v17M590 243l186 324q3 6 3 14 0 15-14 17M776 567l17-9" stroke="#ff0"/>
                    <path d="M762 619q20 0 34-20" stroke="#b0aa20"/>
                </g>
                <!-- dimensions -->
                <g fill="none" stroke="#808000" shape-rendering="crispEdges">
                    <path d="M611 231.500L684 189M681 191l206.500 359M781 613l110-65"/>
                    <path d="M799 619.500h190"/>
                    <path d="M751 484.500A156.500 156.500 0 0 1 986.500 619"/>
                    <path d="M384.500 624v87M798.500 620v91M385 706.500h413"/>
                </g>
                <g fill="#808000">
                    <path d="M681 191l11 14-6 4zM887.500 550l-11-14 6-4zM751 484.500l15-9 2 6zM986.500 619l-5-16h7z"/>
                    <path d="M385 706l16-3v6zM798 706l-16-3v6z"/>
                </g>
                <g fill="#808000" stroke="#808000" stroke-width=".6" font-family="Liberation Sans, sans-serif" font-size="19" text-anchor="middle">
                    <text x="592" y="703">40</text>
                    <text x="793" y="366" dy="7" transform="rotate(60 793 366)">40</text>
                    <text x="914" y="475" dy="7" transform="rotate(24 914 475)">120°</text>
                </g>
                <!-- direction handles -->
                <path d="M578 229l10 15" stroke="#444" stroke-width="4"/>
                <path d="M573 218l13 9-12 7z" fill="#8c8c8c" stroke="#666"/>
                <path d="M790 583l9 16" stroke="#e0e" stroke-width="5"/>
                <path d="M790 583l9 16" stroke="#5c0060" stroke-width="3"/>
                <path d="M784 573l12 7-12 8z" fill="#8a0a8a" stroke="#e0e"/>
            </svg>

            <button class="absolute top-[5px] left-[4px] flex items-center text-[#ee82ee]">
                <svg class="size-[8px]" viewBox="0 0 8 8"><path d="M1 0l5 4-5 4z" fill="#000"/></svg>
                <svg class="mr-[3px] ml-[10px] size-[20px]"><use href="#part"/></svg>
                Blech&nbsp;&nbsp; (Standard&lt;&lt;Stand...
            </button>

            <!-- Heads-up view toolbar -->
            <div class="absolute top-[2px] left-[541px] flex items-center">
                <button aria-label="Ansicht" class="flex size-[26px] items-center justify-center"><svg class="size-[18px]" viewBox="0 0 18 18" stroke="#555"><path d="M1 4l7-3 9 2v11l-8 3-8-3z" fill="#f2f2f2"/><path d="M1 4l6 2v10l-6-2z" fill="#b8e0f2"/><path d="M1 4l9 2 7-3M7 6v10M10 6v11" fill="none"/></svg></button>
                <button aria-label="In Fenster zoomen" class="flex size-[26px] items-center justify-center"><svg class="size-[20px]" viewBox="0 0 20 20"><path d="M2 18l6-6" stroke="#4a9cc6" stroke-width="3"/><circle cx="12" cy="7" r="6" fill="#eef6fa" stroke="#777" stroke-width="1.200"/><path d="M12 2.500l2 2h-4zM12 11.500l2-2h-4zM7.500 7l2-2v4zM16.500 7l-2-2v4z" fill="#222"/></svg></button>
                <button aria-label="Ausschnitt vergrößern" class="flex size-[26px] items-center justify-center"><svg class="size-[20px]" viewBox="0 0 20 20"><path d="M6 1h12v13" fill="none" stroke="#333" stroke-dasharray="2 2"/><path d="M1 19l6-6" stroke="#4a9cc6" stroke-width="3"/><circle cx="11" cy="9" r="6" fill="#dfe9ee" stroke="#888" stroke-width="1.200"/></svg></button>
                <button aria-label="Vorherige Ansicht" class="flex size-[26px] items-center justify-center"><svg class="size-[20px]" viewBox="0 0 20 20"><path d="M2 12l6-4 8-7 2 4-7 7-5 5z" fill="#d0d0d0" stroke="#666"/><ellipse cx="4" cy="14" rx="3" ry="2.500" fill="#eee" stroke="#555"/><path d="M15 10v3h5v4h-5v3l-6-5z" fill="#3c93bf"/></svg></button>
                <button aria-label="Schnittansicht" class="flex size-[26px] items-center justify-center"><svg class="size-[20px]" viewBox="0 0 20 20"><path d="M1 15l7-3h11l-8 6z" fill="#4fa3cc" stroke="#2a7aa5"/><path d="M10 15V3" stroke="#222" stroke-width="1.500"/><path d="M7 6l3-5 3 5z" fill="#222"/></svg></button>
                <button aria-label="Schnitt" class="flex size-[26px] items-center justify-center"><svg class="size-[20px]" viewBox="0 0 20 20" fill="#f2f2f2" stroke="#ccc"><path d="M1 5l5-3 12 1v10l-4 3-3-1v-4H8v6l-3 2-4-1z"/><path d="M1 5l4 1v12M5 6l4-2M11 6l3 1 4-3M14 7v9" fill="none"/></svg></button>
                <button aria-label="Anzeigeart" class="flex size-[26px] items-center justify-center"><svg class="size-[20px]" viewBox="0 0 20 20"><path d="M1 15L15 4l3 4L6 18z" fill="#ccc" stroke="#666"/><path d="M7 0h6l-3 4h4L4 11l3-5H3z" fill="#f7b23c" stroke="#a86508"/><text x="11" y="19" font-family="Open Sans, sans-serif" font-size="12" font-weight="600" fill="#2b86b4">A</text></svg></button>
                <button aria-label="Isometrisch" class="flex size-[26px] items-center justify-center"><svg class="size-[18px]" viewBox="0 0 18 18" stroke="#3a7a9d"><path d="M2 5l7-4 7 3v9l-7 4-7-4z" fill="#5aaad2"/><path d="M2 5l7-4 7 3-7 4z" fill="#a5d8f0"/><path d="M9 8v9"/></svg></button>
                <button aria-label="Vorderseite" class="flex size-[26px] items-center justify-center border border-[#444] bg-[#a6a6a6]"><svg class="size-[18px]" viewBox="0 0 20 20" stroke="#222" fill="none"><path d="M6 1h13v12l-5 6M6 1L1 6M19 1l-5 5M6 1v12h13M6 13l-5 6"/><path d="M1 6h13v13H1z" fill="#3797c6"/></svg></button>
                <button aria-label="Rechts" class="flex size-[26px] items-center justify-center"><svg class="size-[18px]" viewBox="0 0 20 20" stroke="#555" fill="none"><path d="M14 6l5-5v12l-5 6z" fill="#8ecbe8"/><path d="M1 6h13v13H1zM6 1h13M6 1L1 6M6 1v12h13M6 13l-5 6"/></svg></button>
                <button aria-label="Oben" class="flex size-[26px] items-center justify-center"><svg class="size-[18px]" viewBox="0 0 20 20" stroke="#555" fill="none"><path d="M1 6l5-5h13l-5 5z" fill="#6db8dd"/><path d="M1 6h13v13H1zM19 1v12l-5 6M6 6v7h13M6 13l-5 6"/></svg></button>
                <button aria-label="Rückseite" class="flex size-[26px] items-center justify-center"><svg class="size-[18px]" viewBox="0 0 20 20" stroke="#555" fill="none"><path d="M6 1h13v12l-5 6M6 1L1 6"/><path d="M1 6h13v13H1z" fill="#6db8dd"/></svg></button>
            </div>
        </section>
    </main>

    <!-- Callout arrows -->
    <svg class="pointer-events-none absolute top-0 left-0 z-20 h-[821px] w-[1073px] drop-shadow-[3px_5px_3px_rgba(0,0,0,0.5)]" viewBox="0 0 1073 821">
        <g fill="#ff4343" stroke="#ff4343" stroke-linecap="round">
            <path d="M768 363L154 657M757 631L203 731" stroke-width="11"/>
            <path d="M127 670l20-27 13 28zM175 736l27-20 5 29z" stroke="none"/>
        </g>
    </svg>
</body>
</html>
